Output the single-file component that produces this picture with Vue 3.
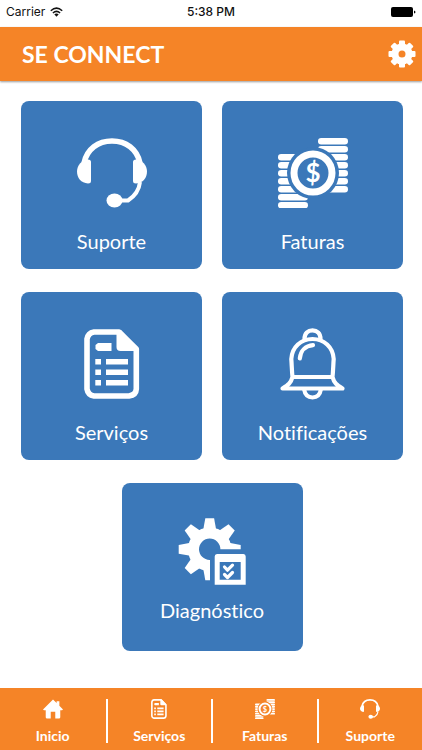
<template>
  <div class="app">
    <!-- Icon set shared by tiles and bottom nav -->
    <svg class="sprite" aria-hidden="true">
      <symbol id="icon-support" viewBox="0 0 70 70">
        <path d="M7 25C10 11 21 3 35 3S60 11 63 25" fill="none" stroke="currentColor" stroke-width="5.5" />
        <path d="M14 24V43Q14 45.500 11 45.500C4 45 0 40 0 33.500C0 27 5 22 11 21.500Q14 21.500 14 24Z" fill="currentColor" />
        <path d="M56 24V43Q56 45.500 59 45.500C66 45 70 40 70 33.500C70 27 65 22 59 21.500Q56 21.500 56 24Z" fill="currentColor" />
        <path d="M63 44C62 53 58 58 51 62.500H38" fill="none" stroke="currentColor" stroke-width="4" stroke-linejoin="round" />
        <ellipse cx="37.500" cy="62.500" rx="8" ry="7" fill="currentColor" />
      </symbol>

      <symbol id="icon-invoices" viewBox="0 0 70 70">
        <rect v-for="n in 7" :key="'r' + n" x="40" :y="(n - 1) * 8" width="30" height="6.4" rx="3.2" fill="currentColor" />
        <rect v-for="n in 7" :key="'l' + n" x="0" :y="(n + 1) * 8" width="30" height="6.4" rx="3.2" fill="currentColor" />
        <circle class="cutout" cx="35" cy="35" r="26" />
        <circle cx="35" cy="35" r="19" fill="none" stroke="currentColor" stroke-width="7" />
      </symbol>

      <symbol id="icon-services" viewBox="0 0 70 70">
        <path d="M17 3H42L59.300 20V60Q59 66 52 67H17Q11 66 10 60V10Q11 4 17 3Z" fill="none" stroke="currentColor" stroke-width="5.6" stroke-linejoin="round" />
        <path d="M39.500 2V18Q39.500 22 43.500 22H60V18L44 1Z" fill="currentColor" />
        <path d="M21 14H34.500V22H21L18.500 20V16Z" fill="currentColor" />
        <path d="M18.300 30H24V35.500H18.300ZM29 30H51V35.500H29ZM18.300 40.500H24V46H18.300ZM29 40.500H51V46H29ZM18.300 51H24V56.500H18.300ZM29 51H51V56.500H29Z" fill="currentColor" />
      </symbol>

      <symbol id="icon-bell" viewBox="1 1 70 70" overflow="visible">
        <g fill="none" stroke="currentColor" stroke-width="4.2" stroke-linecap="round" stroke-linejoin="round">
          <path d="M15.500 49C14.800 43 14.800 37 14.300 31C15 19 24 11 35.500 11S56 19 56.700 31C56.200 37 56.200 43 55.500 49C57 55 60 57 65.500 60.500H5.500C11 57 14 55 15.500 49Z" />
          <path d="M16 49H55" />
          <path d="M27.500 11C27.500 5 31 2.300 35.500 2.300S43.500 5 43.500 11" />
          <path d="M27 61C28 67 31 69.500 35.500 69.500S43 67 44 61" />
          <path d="M22.800 30.500C23.500 23 28.500 17.800 36 17.200" />
        </g>
      </symbol>

      <symbol id="icon-diagnostics" viewBox="0 0 70 70">
        <circle cx="32.700" cy="31.300" r="16.200" fill="none" stroke="currentColor" stroke-width="11" />
        <path v-for="n in 8" :key="n" d="M26.200 12L28.300 0.300H37.100L39.200 12Z" :transform="`rotate(${n * 45} 32.700 31.300)`" fill="currentColor" />
        <path class="cutout" d="M33 31.300H70V70H33Z" />
        <path d="M40 36H66.500Q68.700 36 68.700 38.500V66.700H37.700V38.500Q37.700 36 40 36ZM42.700 44V61.700H63.700V44Z" fill="currentColor" fill-rule="evenodd" />
        <path d="M47.500 49L50.500 52.200L55.500 47.200M47.500 56.500L50.500 59.500L55.500 54.500" fill="none" stroke="currentColor" stroke-width="3.2" stroke-linecap="round" stroke-linejoin="round" />
      </symbol>

      <symbol id="icon-home" viewBox="0 0 22 22">
        <path d="M11 0.500L15 4.500V2.500H18V7.500L22 11.500L21 12.500H19V20Q19 21.500 17.500 21.500H13.500V14H8.500V21.500H4.500Q3 21.500 3 20V12.500H1L0 11.500Z" fill="currentColor" />
      </symbol>

      <symbol id="icon-gear" viewBox="0 0 28 28">
        <circle cx="14" cy="14" r="7" fill="none" stroke="currentColor" stroke-width="7" />
        <rect v-for="n in 8" :key="n" x="11" y="0.500" width="6" height="6" rx="1" :transform="`rotate(${n * 45} 14 14)`" fill="currentColor" />
      </symbol>
    </svg>

    <div class="status-bar">
      <span class="carrier">
        Carrier
        <svg class="wifi" viewBox="0 0 13 10" width="13" height="10">
          <path d="M0.800 3.700Q6.500 -1.500 12.200 3.700M2.900 6Q6.500 2.700 10.100 6" fill="none" stroke="#111" stroke-width="1.500" />
          <path d="M4.300 7.300Q6.500 5.500 8.700 7.300L6.500 9.700Z" fill="#111" />
        </svg>
      </span>
      <span class="time">5:38 PM</span>
      <svg class="battery" viewBox="0 0 25 10" width="25" height="10">
        <rect width="22" height="10" rx="2" />
        <path d="M23 3.500Q24.500 4 24.500 5T23 6.500Z" />
      </svg>
    </div>

    <header class="header">
      <h1>SE CONNECT</h1>
      <button class="settings" type="button" aria-label="Configurações">
        <svg width="28" height="28"><use href="#icon-gear" /></svg>
      </button>
    </header>

    <main class="tiles">
      <button v-for="tile in tiles" :key="tile.label" class="tile" type="button">
        <svg class="icon" viewBox="0 0 70 70">
          <use :href="'#icon-' + tile.icon" width="70" height="70" />
          <text v-if="tile.icon === 'invoices'" class="coin" x="35" y="44" text-anchor="middle">$</text>
        </svg>
        <span>{{ tile.label }}</span>
      </button>
    </main>

    <nav class="bottom-nav">
      <a v-for="item in navItems" :key="item.label" href="#">
        <svg class="icon" viewBox="0 0 70 70">
          <use :href="'#icon-' + item.icon" width="70" height="70" />
          <text v-if="item.icon === 'invoices'" class="coin" x="35" y="44" text-anchor="middle">$</text>
        </svg>
        <span>{{ item.label }}</span>
      </a>
    </nav>
  </div>
</template>

<script setup>
const tiles = [
  { label: 'Suporte', icon: 'support' },
  { label: 'Faturas', icon: 'invoices' },
  { label: 'Serviços', icon: 'services' },
  { label: 'Notificações', icon: 'bell' },
  { label: 'Diagnóstico', icon: 'diagnostics' }
]

const navItems = [
  { label: 'Inicio', icon: 'home' },
  { label: 'Serviços', icon: 'services' },
  { label: 'Faturas', icon: 'invoices' },
  { label: 'Suporte', icon: 'support' }
]
</script>

<style>
body {
  margin: 0;
  background: #fff;
}
</style>

<style scoped>
.app {
  --orange: #f58427;
  --blue: #3b78b9;
  display: flex;
  flex-direction: column;
  min-height: 100vh;
  font-family: Lato, "Liberation Sans", sans-serif;
}

.sprite {
  position: absolute;
  width: 0;
  height: 0;
}

.icon {
  flex-shrink: 0;
  overflow: visible;
}

.cutout {
  fill: var(--cutout);
}

.coin {
  fill: currentColor;
  font-size: 26px;
  font-weight: 700;
}

.status-bar {
  display: grid;
  grid-template-columns: 1fr auto 1fr;
  align-items: center;
  height: 23px;
  padding: 0 6px 4px;
  font-family: Inter, "Liberation Sans", sans-serif;
  font-size: 12px;
  color: #111;
}

.carrier {
  display: flex;
  align-items: center;
  gap: 5px;
}

.time {
  font-weight: 500;
}

.battery {
  justify-self: end;
}

.header {
  display: flex;
  align-items: center;
  justify-content: space-between;
  height: 54px;
  padding: 0 6px 0 22px;
  background: var(--orange);
  color: #fff;
  box-shadow: 0 1px 2px rgba(0, 0, 0, 0.4);
}

.header h1 {
  margin: 0;
  font-size: 23px;
  font-weight: 700;
}

.settings {
  display: flex;
  padding: 0;
  border: 0;
  background: none;
  color: #fff;
}

.tiles {
  display: grid;
  grid-template-columns: 1fr 1fr;
  gap: 23px 20px;
  padding: 20px 19px 20px 21px;
}

.tile {
  --cutout: var(--blue);
  display: flex;
  flex-direction: column;
  align-items: center;
  gap: 19px;
  height: 168px;
  padding: 37px 0 0;
  border: 0;
  border-radius: 8px;
  background: var(--blue);
  color: #fff;
  font-family: inherit;
  font-size: 20px;
  font-variant-ligatures: none;
  line-height: 28px;
}

.tile .icon {
  width: 70px;
  height: 70px;
}

.tile:last-child {
  grid-column: 1 / -1;
  justify-self: center;
  width: calc(50% - 10px);
  gap: 8px;
  padding-top: 35px;
}

.bottom-nav {
  --cutout: var(--orange);
  display: grid;
  grid-template-columns: repeat(4, 1fr);
  margin-top: auto;
  padding: 11px 0 7px;
  background: var(--orange);
}

.bottom-nav a {
  display: flex;
  flex-direction: column;
  align-items: center;
  gap: 9px;
  height: 44px;
  color: #fff;
  font-size: 14px;
  font-weight: 700;
  line-height: 16px;
  text-decoration: none;
}

.bottom-nav a + a {
  border-left: 2px solid #fff;
}

.bottom-nav .icon {
  width: 20px;
  height: 20px;
}
</style>
